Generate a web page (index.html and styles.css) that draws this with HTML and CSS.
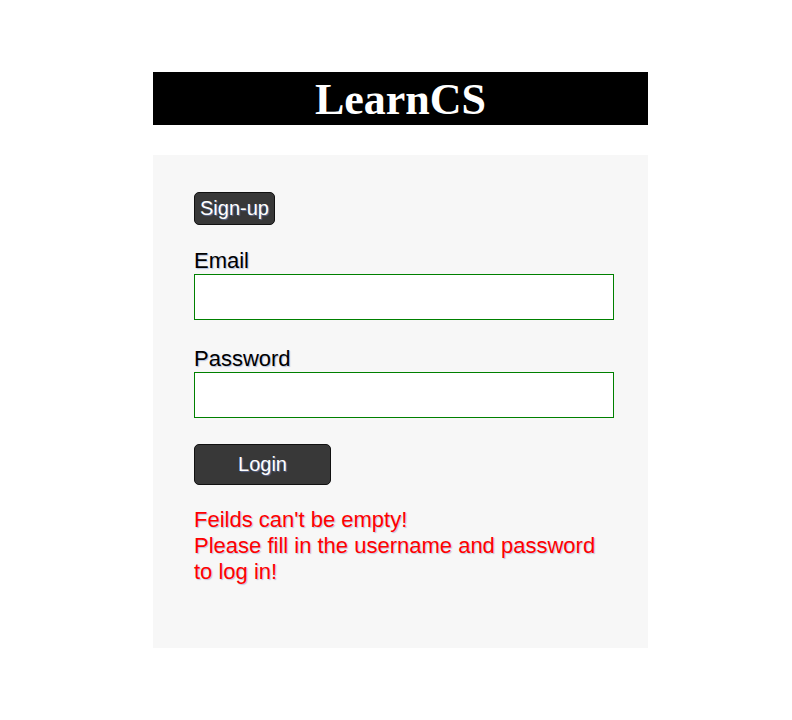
FILE: index.html
```html
<!DOCTYPE html>
<html>
<head>
<meta charset="utf-8">
<link rel="stylesheet" href="styles.css">
</head>
<body>
<div class="page">
  <header class="banner"><h1 class="title">LearnCS</h1></header>
  <main class="panel">
    <button class="btn btn-small">Sign-up</button>
    <form class="form">
      <label class="label" for="email">Email</label>
      <input class="field" id="email" type="text">
      <label class="label label-gap" for="pw">Password</label>
      <input class="field" id="pw" type="password">
      <button class="btn btn-login" type="button">Login</button>
    </form>
    <p class="error">Feilds can't be empty!<br>Please fill in the username and password to log in!</p>
  </main>
</div>
</body>
</html>
```
FILE: styles.css
```css
html, body {
  margin: 0;
  padding: 0;
  background: #fff;
}
.page {
  width: 495px;
  margin: 72px 0 0 153px;
  font-family: "Liberation Sans", Arial, sans-serif;
}
.banner {
  background: #000;
  height: 53px;
  display: flex;
  align-items: center;
  justify-content: center;
}
.title {
  margin: 0;
  color: #fff;
  font-family: "Liberation Serif", "Times New Roman", serif;
  font-weight: bold;
  font-size: 44px;
  line-height: 53px;
  padding-top: 1px;
}
.panel {
  margin-top: 30px;
  background: #f7f7f7;
  height: 493px;
  box-sizing: border-box;
  padding: 37px 41px 0 41px;
}
.btn {
  display: block;
  background: #383838;
  color: #fff;
  border: 1px solid #111;
  border-radius: 5px;
  font-family: "Liberation Sans", Arial, sans-serif;
  font-size: 20px;
  line-height: 23px;
  text-shadow: 1px 1px 1px rgba(120, 140, 200, 0.6);
  cursor: pointer;
}
.btn-small {
  padding: 4px 5px;
  height: 33px;
}
.form {
  margin: 23px 0 0 0;
  display: flex;
  flex-direction: column;
  align-items: flex-start;
}
.label {
  font-size: 22px;
  line-height: 25px;
  color: #000;
  text-shadow: 1px 1px 1px rgba(150, 170, 210, 0.7);
  margin-bottom: 1px;
}
.label-gap {
  margin-top: 26px;
}
.field {
  width: 420px;
  height: 46px;
  box-sizing: border-box;
  border: 1px solid #008000;
  background: #fff;
  margin: 0;
  padding: 0 6px;
  font-size: 18px;
  outline: none;
}
.btn-login {
  margin-top: 26px;
  width: 137px;
  height: 41px;
  padding: 0;
}
.error {
  margin: 22px 0 0 0;
  width: 420px;
  color: #ff0000;
  font-size: 22px;
  line-height: 26px;
  text-shadow: 1px 1px 1px rgba(150, 160, 200, 0.6);
}
```
